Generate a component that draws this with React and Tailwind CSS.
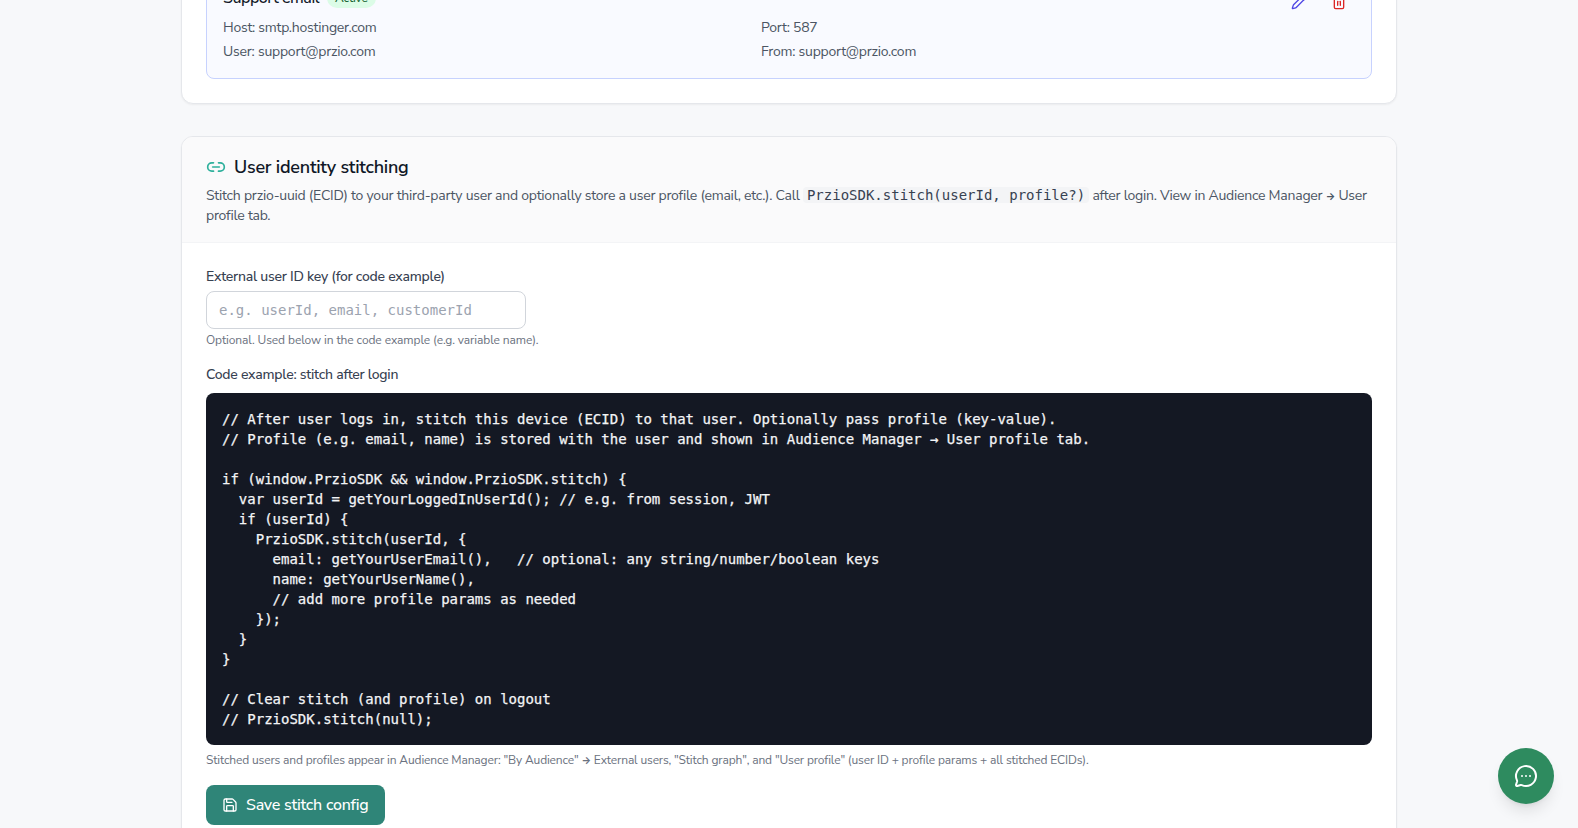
import React from "react";
import { Link2, MessageCircleMore, Pencil, Save, Trash2 } from "lucide-react";

const codeExample = `// After user logs in, stitch this device (ECID) to that user. Optionally pass profile (key-value).
// Profile (e.g. email, name) is stored with the user and shown in Audience Manager → User profile tab.

if (window.PrzioSDK && window.PrzioSDK.stitch) {
  var userId = getYourLoggedInUserId(); // e.g. from session, JWT
  if (userId) {
    PrzioSDK.stitch(userId, {
      email: getYourUserEmail(),   // optional: any string/number/boolean keys
      name: getYourUserName(),
      // add more profile params as needed
    });
  }
}

// Clear stitch (and profile) on logout
// PrzioSDK.stitch(null);`;

const Arrow = () => <span className="text-[10px] font-bold leading-none">→</span>;

const App = () => {
  return (
    <div className="h-screen overflow-hidden bg-[#f7f8fa] font-['Nunito_Sans','Inter','Liberation_Sans',sans-serif] tracking-[-0.015em] text-[#111827]">
      <div className="mx-auto max-w-7xl px-8 -mt-[56px]">
        <div className="rounded-xl border border-gray-200 bg-white p-6 shadow-xs">
          <div className="rounded-lg border border-[#c7d2fe] bg-[#f9faff] p-4">
            <div className="flex items-start justify-between">
              <div className="flex-1">
                <div className="flex items-center gap-2">
                  <span className="text-base font-medium tracking-[-0.03em] text-[#111827]">Support email</span>
                  <span className="rounded-full bg-[#dcfce7] px-2 py-0.5 text-xs font-medium text-[#166534]">Active</span>
                </div>
                <div className="mt-2 grid grid-cols-2 gap-x-4 gap-y-1 text-sm text-[#4b5563]">
                  <div>Host: smtp.hostinger.com</div>
                  <div>Port: 587</div>
                  <div>User: support@przio.com</div>
                  <div>From: support@przio.com</div>
                </div>
              </div>
              <div className="flex gap-2">
                <button className="rounded-lg p-2 text-[#4f46e5]"><Pencil className="h-4 w-4" /></button>
                <button className="rounded-lg p-2 text-[#dc2626]"><Trash2 className="h-4 w-4" /></button>
              </div>
            </div>
          </div>
        </div>

        <div className="mt-8 overflow-hidden rounded-xl border border-gray-200 bg-white shadow-xs">
          <div className="border-b border-gray-100 bg-[#fafafb] px-6 pb-4 pt-4">
            <div className="flex items-center gap-2">
              <Link2 className="h-5 w-5 text-[#2eb09c]" />
              <h2 className="text-lg font-semibold text-[#111827]">User identity stitching</h2>
            </div>
            <p className="mt-[5px] text-sm leading-5 text-[#4b5563]">
              Stitch przio-uuid (ECID) to your third-party user and optionally store a user profile (email, etc.). Call{" "}
              <code className="rounded bg-[#f3f4f6] px-1 font-['DejaVu_Sans_Mono',monospace] text-sm leading-none tracking-normal text-[#374151]">PrzioSDK.stitch(userId, profile?)</code>{" "}
              after login. View in Audience Manager <Arrow /> User profile tab.
            </p>
          </div>
          <div className="p-6">
            <label className="block text-sm font-medium text-[#374151]">External user ID key (for code example)</label>
            <input
              type="text"
              placeholder="e.g. userId, email, customerId"
              className="mt-1 block h-[38px] w-80 rounded-lg border border-[#d1d5db] bg-white px-3 font-['DejaVu_Sans_Mono',monospace] text-sm tracking-normal placeholder:text-[#9ca3af]"
            />
            <p className="mt-[3px] text-xs tracking-[-0.008em] text-[#6b7280]">Optional. Used below in the code example (e.g. variable name).</p>
            <div className="mb-2 mt-[17px] text-sm font-medium text-[#374151]">Code example: stitch after login</div>
            <pre className="overflow-hidden rounded-lg bg-[#141823] p-4 font-['DejaVu_Sans_Mono',monospace] text-sm leading-5 tracking-normal text-[#f3f4f6] [-webkit-text-stroke:0.25px]">{codeExample}</pre>
            <p className="mt-[7px] text-xs tracking-[-0.0125em] text-[#6b7280]">
              Stitched users and profiles appear in Audience Manager: "By Audience" <Arrow /> External users, "Stitch graph", and "User profile" (user ID + profile params + all stitched ECIDs).
            </p>
            <button className="mt-[17px] flex h-10 items-center gap-2 rounded-lg bg-[#2f8578] px-4 text-base font-medium text-white">
              <Save className="h-4 w-4" />
              Save stitch config
            </button>
          </div>
        </div>
      </div>

      <button className="fixed bottom-6 right-6 flex h-14 w-14 items-center justify-center rounded-full bg-[#2e8b5f] text-white shadow-lg">
        <MessageCircleMore className="h-6 w-6" />
      </button>
    </div>
  );
};

export default App;
